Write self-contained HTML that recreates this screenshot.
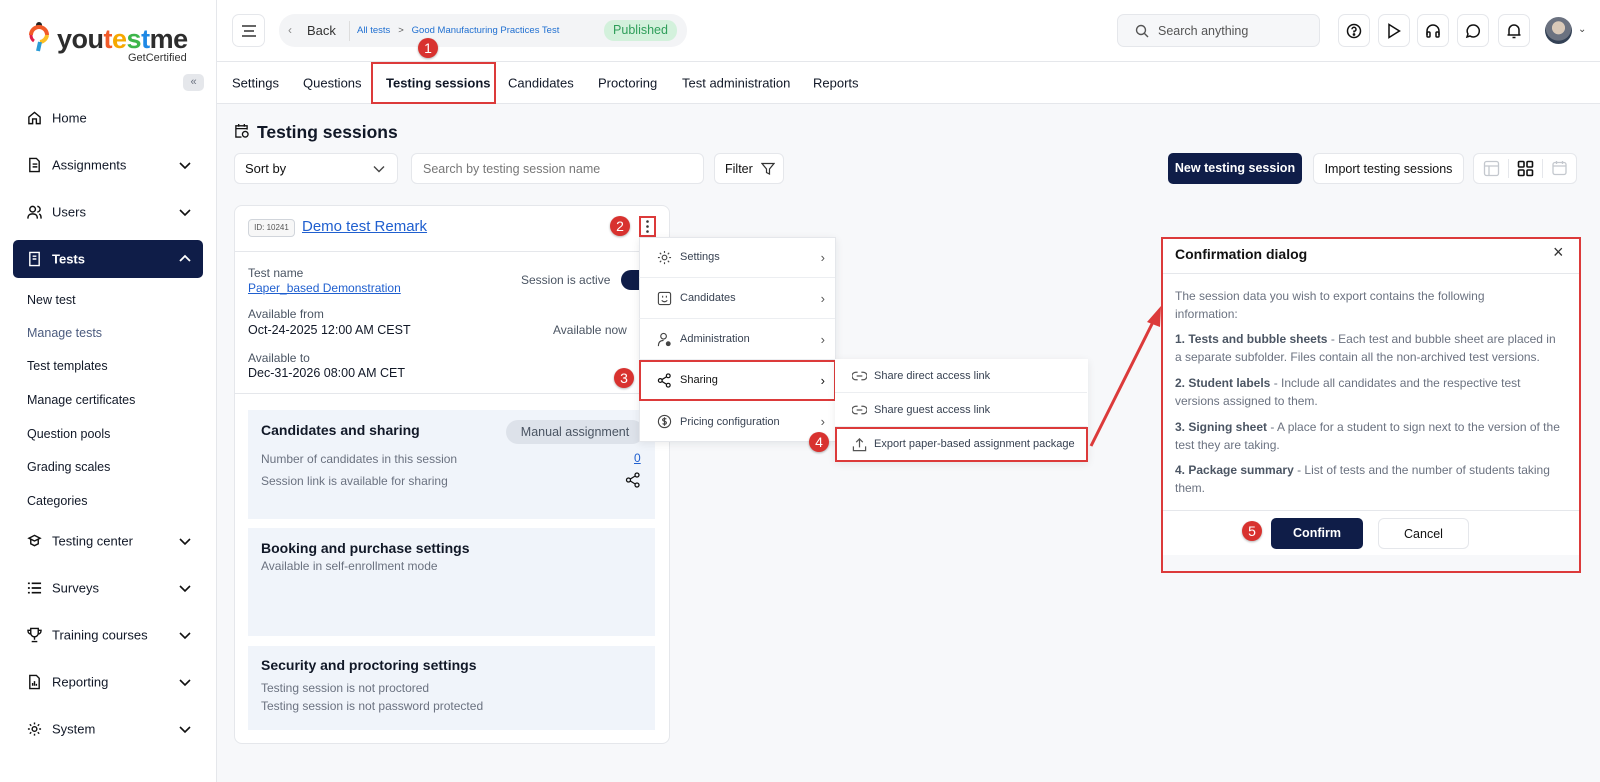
<!DOCTYPE html>
<html><head><meta charset="utf-8"><style>
*{box-sizing:border-box;margin:0;padding:0}
body{width:1600px;height:782px;overflow:hidden;font-family:"Liberation Sans",sans-serif;background:#f7f8fa;position:relative;color:#1f2937;font-size:13px}
.a{position:absolute}
.side{left:0;top:0;width:217px;height:782px;background:#fff;border-right:1px solid #e5e7eb}
.hdr{left:217px;top:0;width:1383px;height:62px;background:#fff;border-bottom:1px solid #e5e7eb}
.tabs{left:217px;top:62px;width:1383px;height:42px;background:#fff;border-bottom:1px solid #e5e7eb}
.nav{left:27px;font-size:13px;color:#111827;display:flex;align-items:center;gap:10px;transform:translateY(-50%)}
.sub{left:27px;font-size:12.5px;color:#111827;transform:translateY(-50%)}
.ib{width:32px;height:33px;border:1px solid #e5e7eb;border-radius:7px;background:#fff;display:flex;align-items:center;justify-content:center;top:14px}
.tab{top:83px;transform:translateY(-50%);font-size:13px;color:#111827}
.btn{border:1px solid #e5e7eb;border-radius:6px;background:#fff;display:flex;align-items:center}
.badge{width:20px;height:20px;border-radius:50%;background:#d8322f;color:#fff;font-size:14px;display:flex;align-items:center;justify-content:center;box-shadow:0 1px 2px rgba(0,0,0,.3)}
.red{border:2px solid #dc3a3a}
.mi{left:639px;width:196px;height:41px;display:flex;align-items:center;font-size:11px;color:#374151;border-bottom:1px solid #eceef1}
.mi svg{margin:0 8px 0 18px}
.mi .r{position:absolute;right:10px;color:#555;font-size:13px}
.si{left:835px;width:252px;height:34px;display:flex;align-items:center;font-size:11px;color:#374151;border-bottom:1px solid #eceef1}
.si svg{margin:0 7px 0 17px}
.lbl{font-size:12px;color:#4b5563}
.val{font-size:12.5px;color:#111827}
.sec{left:248px;width:407px;background:#f0f4fa}
.sec h4{font-size:14px;font-weight:bold;color:#111827;position:absolute;left:13px}
.sec p{position:absolute;left:13px;font-size:12px;color:#6b7280}
.dp{position:absolute;left:14px;width:385px;font-size:12px;color:#6b7280;line-height:18px}
.dp b{font-weight:bold;color:#4b5563}
</style></head><body>
<div class="a side"></div>
<svg class="a" style="left:28px;top:22px" width="22" height="30" viewBox="0 0 22 30"><circle cx="11" cy="3" r="3" fill="#222"/><path d="M3 13a8 8 0 0 1 16 0" stroke="#f15a29" stroke-width="4" fill="none"/><path d="M19 13a8 8 0 0 1-7 7" stroke="#fbbf24" stroke-width="4" fill="none"/><path d="M12 20l-2 9" stroke="#2b9bd6" stroke-width="4"/><path d="M3 13q0 4 3 6" stroke="#e11d48" stroke-width="3" fill="none"/></svg>
<div class="a" style="left:57px;top:24px;font-size:27px;font-weight:bold;letter-spacing:-0.5px;color:#2d2d2d">you<span style="color:#f15a29">t</span><span style="color:#f6a800">e</span><span style="color:#3db54a">s</span><span style="color:#1e88e5">t</span>me</div>
<div class="a" style="left:128px;top:52px;font-size:11px;color:#333">GetCertified</div>
<div class="a" style="left:183px;top:74px;width:21px;height:17px;background:#e5e7eb;border-radius:5px;color:#6b7280;font-size:11px;text-align:center;line-height:16px">«</div>

<div class="a nav" style="top:118px"><svg width="15" height="15" viewBox="0 0 16 16" fill="none" stroke="#111" stroke-width="1.5"><path d="M2 7l6-5 6 5v7H10V9H6v5H2z"/></svg>Home</div>
<div class="a nav" style="top:165px"><svg width="15" height="15" viewBox="0 0 16 16" fill="none" stroke="#111" stroke-width="1.5"><path d="M3 1h7l3 3v11H3z M6 7h5M6 10h5"/></svg>Assignments</div>
<div class="a nav" style="top:212px"><svg width="15" height="15" viewBox="0 0 16 16" fill="none" stroke="#111" stroke-width="1.5"><circle cx="6" cy="5" r="3"/><path d="M1 15c0-4 2-5 5-5s5 1 5 5M11 2a3 3 0 0 1 0 6M13 10c2 1 2 3 2 5"/></svg>Users</div>
<div class="a" style="left:13px;top:240px;width:190px;height:38px;background:#0f1d48;border-radius:5px"></div>
<div class="a nav" style="top:259px;color:#fff;font-weight:bold"><svg width="15" height="15" viewBox="0 0 16 16" fill="none" stroke="#fff" stroke-width="1.5"><path d="M3 1h10v14H3z M6 5h4M6 8h4"/></svg>Tests</div>
<svg class="a" style="left:179px;top:254px" width="12" height="10" viewBox="0 0 12 10"><path d="M1 7l5-5 5 5" stroke="#fff" stroke-width="1.8" fill="none"/></svg>
<svg class="a" style="left:179px;top:160px" width="12" height="10" viewBox="0 0 12 10"><path d="M1 3l5 5 5-5" stroke="#111" stroke-width="1.6" fill="none"/></svg>
<svg class="a" style="left:179px;top:207px" width="12" height="10" viewBox="0 0 12 10"><path d="M1 3l5 5 5-5" stroke="#111" stroke-width="1.6" fill="none"/></svg>
<div class="a sub" style="top:300px">New test</div>
<div class="a sub" style="top:333px;color:#4b5b7e">Manage tests</div>
<div class="a sub" style="top:366px">Test templates</div>
<div class="a sub" style="top:400px">Manage certificates</div>
<div class="a sub" style="top:434px">Question pools</div>
<div class="a sub" style="top:467px">Grading scales</div>
<div class="a sub" style="top:501px">Categories</div>
<div class="a nav" style="top:541px"><svg width="15" height="15" viewBox="0 0 16 16" fill="none" stroke="#111" stroke-width="1.5"><path d="M8 2l6 3-6 3-6-3z M4 6v5l4 2 4-2V6"/></svg>Testing center</div>
<div class="a nav" style="top:588px"><svg width="15" height="15" viewBox="0 0 16 16" fill="none" stroke="#111" stroke-width="1.8"><path d="M1 3h2M1 8h2M1 13h2M5 3h10M5 8h10M5 13h10"/></svg>Surveys</div>
<div class="a nav" style="top:635px"><svg width="15" height="15" viewBox="0 0 16 16" fill="none" stroke="#111" stroke-width="1.5"><path d="M4 1h8v5a4 4 0 0 1-8 0z M4 3H1c0 3 2 4 3 4M12 3h3c0 3-2 4-3 4M8 10v3M5 15h6"/></svg>Training courses</div>
<div class="a nav" style="top:682px"><svg width="15" height="15" viewBox="0 0 16 16" fill="none" stroke="#111" stroke-width="1.5"><path d="M3 1h7l3 3v11H3z M6 12V9M8 12V7M10 12v-2"/></svg>Reporting</div>
<div class="a nav" style="top:729px"><svg width="15" height="15" viewBox="0 0 16 16" fill="none" stroke="#111" stroke-width="1.5"><circle cx="8" cy="8" r="2.5"/><path d="M8 1v2M8 13v2M1 8h2M13 8h2M3 3l1.5 1.5M11.5 11.5L13 13M3 13l1.5-1.5M11.5 4.5L13 3"/></svg>System</div>
<svg class="a" style="left:179px;top:536px" width="12" height="10" viewBox="0 0 12 10"><path d="M1 3l5 5 5-5" stroke="#111" stroke-width="1.6" fill="none"/></svg>
<svg class="a" style="left:179px;top:583px" width="12" height="10" viewBox="0 0 12 10"><path d="M1 3l5 5 5-5" stroke="#111" stroke-width="1.6" fill="none"/></svg>
<svg class="a" style="left:179px;top:630px" width="12" height="10" viewBox="0 0 12 10"><path d="M1 3l5 5 5-5" stroke="#111" stroke-width="1.6" fill="none"/></svg>
<svg class="a" style="left:179px;top:677px" width="12" height="10" viewBox="0 0 12 10"><path d="M1 3l5 5 5-5" stroke="#111" stroke-width="1.6" fill="none"/></svg>
<svg class="a" style="left:179px;top:724px" width="12" height="10" viewBox="0 0 12 10"><path d="M1 3l5 5 5-5" stroke="#111" stroke-width="1.6" fill="none"/></svg>

<div class="a hdr"></div>
<div class="a ib" style="left:232px;width:33px"><svg width="16" height="14" viewBox="0 0 16 14" stroke="#333" stroke-width="1.5"><path d="M1 2h14M3 7h10M1 12h14"/></svg></div>
<div class="a" style="left:279px;top:14px;width:408px;height:33px;background:#f3f4f6;border-radius:16px"></div>
<div class="a" style="left:288px;top:23px;color:#888;font-size:12px">‹</div>
<div class="a" style="left:307px;top:23px;font-size:13px;color:#333">Back</div>
<div class="a" style="left:349px;top:21px;width:1px;height:20px;background:#ddd"></div>
<div class="a" style="left:357px;top:25px;font-size:9.5px;color:#1f6fd1">All tests &nbsp;&nbsp;<span style="color:#555">&gt;</span>&nbsp;&nbsp; Good Manufacturing Practices Test</div>
<div class="a" style="left:604px;top:20px;width:73px;height:21px;background:#d3f1dc;border-radius:10px;color:#2f9e5a;font-size:12.5px;text-align:center;line-height:21px">Published</div>
<div class="a badge" style="left:418px;top:38px">1</div>
<div class="a" style="left:1117px;top:14px;width:203px;height:33px;background:#f6f7f9;border:1px solid #e5e7eb;border-radius:7px"></div>
<svg class="a" style="left:1135px;top:24px" width="14" height="14" viewBox="0 0 14 14" fill="none" stroke="#555" stroke-width="1.4"><circle cx="6" cy="6" r="4.5"/><path d="M9.5 9.5L13 13"/></svg>
<div class="a" style="left:1158px;top:24px;font-size:12.5px;color:#555">Search anything</div>
<div class="a ib" style="left:1338px"><svg width="16" height="16" viewBox="0 0 16 16" fill="none" stroke="#111" stroke-width="1.5"><circle cx="8" cy="8" r="6.5"/><path d="M6 6.3a2 2 0 1 1 2 2v1.2"/><circle cx="8" cy="11.5" r=".6" fill="#111"/></svg></div>
<div class="a ib" style="left:1378px"><svg width="14" height="16" viewBox="0 0 14 16" fill="none" stroke="#111" stroke-width="1.5"><path d="M2 1.5v13L12.5 8z"/></svg></div>
<div class="a ib" style="left:1417px"><svg width="16" height="16" viewBox="0 0 16 16" fill="none" stroke="#111" stroke-width="1.5"><path d="M2 12V8a6 6 0 0 1 12 0v4"/><rect x="2" y="9" width="3" height="5" rx="1"/><rect x="11" y="9" width="3" height="5" rx="1"/></svg></div>
<div class="a ib" style="left:1457px"><svg width="16" height="16" viewBox="0 0 16 16" fill="none" stroke="#111" stroke-width="1.5"><path d="M8 2a6 6 0 1 1-3 11L2 14l1-3A6 6 0 0 1 8 2z"/></svg></div>
<div class="a ib" style="left:1498px"><svg width="16" height="16" viewBox="0 0 16 16" fill="none" stroke="#111" stroke-width="1.5"><path d="M3 12V7a5 5 0 0 1 10 0v5h1.5H1.5zM6.5 14.5h3"/></svg></div>
<div class="a" style="left:1545px;top:17px;width:27px;height:27px;border-radius:50%;background:radial-gradient(circle at 50% 40%,#d9c9b8 0 30%,#6b7280 32% 60%,#334155 62%)"></div>
<div class="a" style="left:1578px;top:24px;font-size:10px;color:#444">⌄</div>

<div class="a tabs"></div>
<div class="a tab" style="left:232px">Settings</div>
<div class="a tab" style="left:303px">Questions</div>
<div class="a tab" style="left:386px;font-weight:bold">Testing sessions</div>
<div class="a tab" style="left:508px">Candidates</div>
<div class="a tab" style="left:598px">Proctoring</div>
<div class="a tab" style="left:682px">Test administration</div>
<div class="a tab" style="left:813px">Reports</div>
<div class="a red" style="left:371px;top:62px;width:125px;height:42px"></div>

<svg class="a" style="left:234px;top:123px" width="15" height="15" viewBox="0 0 16 16" fill="none" stroke="#111" stroke-width="1.4"><path d="M14 7V3H2v12h6M2 6h12M5 1v3M11 1v3"/><circle cx="12" cy="12" r="3"/></svg>
<div class="a" style="left:257px;top:122px;font-size:17.5px;font-weight:bold;color:#111827">Testing sessions</div>
<div class="a btn" style="left:234px;top:153px;width:164px;height:31px;padding-left:10px;font-size:13px;color:#111">Sort by<svg style="position:absolute;right:12px" width="12" height="8" viewBox="0 0 12 8"><path d="M1 1.5l5 5 5-5" stroke="#444" stroke-width="1.4" fill="none"/></svg></div>
<div class="a btn" style="left:411px;top:153px;width:293px;height:31px;padding-left:11px;font-size:12.5px;color:#777">Search by testing session name</div>
<div class="a btn" style="left:714px;top:153px;width:70px;height:31px;padding-left:10px;font-size:12.5px;color:#111">Filter<svg style="margin-left:8px" width="14" height="14" viewBox="0 0 14 14"><path d="M1 1.5h12L8.5 7v5l-3-1.5V7z" stroke="#333" stroke-width="1.2" fill="none"/></svg></div>
<div class="a" style="left:1168px;top:153px;width:134px;height:31px;background:#0f1d48;border-radius:5px;color:#fff;font-size:12.5px;font-weight:bold;text-align:center;line-height:31px">New testing session</div>
<div class="a btn" style="left:1313px;top:153px;width:151px;height:31px;justify-content:center;font-size:12.5px;color:#111">Import testing sessions</div>
<div class="a btn" style="left:1473px;top:153px;width:104px;height:31px"></div>
<svg class="a" style="left:1483px;top:160px" width="17" height="17" viewBox="0 0 17 17" fill="none" stroke="#c4c8ce" stroke-width="1.3"><rect x="1.5" y="1.5" width="14" height="14" rx="2"/><path d="M1.5 6h14M6 6v9.5"/></svg>
<div class="a" style="left:1508px;top:159px;width:1px;height:19px;background:#e5e7eb"></div>
<svg class="a" style="left:1517px;top:160px" width="17" height="17" viewBox="0 0 17 17" fill="none" stroke="#111" stroke-width="1.6"><rect x="1.5" y="1.5" width="5.5" height="5.5" rx="1"/><rect x="10" y="1.5" width="5.5" height="5.5" rx="1"/><rect x="1.5" y="10" width="5.5" height="5.5" rx="1"/><rect x="10" y="10" width="5.5" height="5.5" rx="1"/></svg>
<div class="a" style="left:1542px;top:159px;width:1px;height:19px;background:#e5e7eb"></div>
<svg class="a" style="left:1552px;top:160px" width="15" height="16" viewBox="0 0 15 16" fill="none" stroke="#c4c8ce" stroke-width="1.3"><rect x="1" y="2.5" width="13" height="12" rx="2"/><path d="M1 6h13M4.5 1v3M10.5 1v3"/></svg>

<div class="a" style="left:234px;top:205px;width:436px;height:539px;background:#fff;border:1px solid #e5e7eb;border-radius:8px"></div>
<div class="a" style="left:248px;top:219px;width:47px;height:18px;border:1px solid #d1d5db;border-radius:4px;background:#f7f7f7;font-size:8px;color:#555;text-align:center;line-height:16px">ID: 10241</div>
<div class="a" style="left:302px;top:218px;font-size:15px;color:#1f5fcf;text-decoration:underline">Demo test Remark</div>
<div class="a" style="left:235px;top:251px;width:434px;height:1px;background:#e5e7eb"></div>
<svg class="a" style="left:639px;top:216px" width="17" height="21" viewBox="0 0 17 21"><circle cx="8.5" cy="5.5" r="1.3" fill="#333"/><circle cx="8.5" cy="10.5" r="1.3" fill="#333"/><circle cx="8.5" cy="15.5" r="1.3" fill="#333"/></svg>
<div class="a red" style="left:639px;top:216px;width:17px;height:21px"></div>
<div class="a badge" style="left:610px;top:216px">2</div>
<div class="a lbl" style="left:248px;top:266px">Test name</div>
<div class="a" style="left:248px;top:281px;font-size:12px;color:#1f5fcf;text-decoration:underline">Paper_based Demonstration</div>
<div class="a lbl" style="left:521px;top:273px">Session is active</div>
<div class="a" style="left:621px;top:270px;width:30px;height:20px;border-radius:10px;background:#0f1d48"></div>
<div class="a lbl" style="left:248px;top:307px">Available from</div>
<div class="a val" style="left:248px;top:323px">Oct-24-2025 12:00 AM CEST</div>
<div class="a lbl" style="left:553px;top:323px">Available now</div>
<div class="a lbl" style="left:248px;top:351px">Available to</div>
<div class="a val" style="left:248px;top:366px">Dec-31-2026 08:00 AM CET</div>
<div class="a" style="left:235px;top:393px;width:434px;height:1px;background:#e5e7eb"></div>
<div class="a sec" style="top:410px;height:109px"><h4 style="top:12px">Candidates and sharing</h4><p style="top:42px">Number of candidates in this session</p><p style="top:64px">Session link is available for sharing</p>
<div style="position:absolute;left:258px;top:10px;width:138px;height:24px;background:#dde2ea;border-radius:12px;font-size:12.5px;color:#4b5563;text-align:center;line-height:24px">Manual assignment</div>
<div style="position:absolute;left:386px;top:41px;font-size:12px;color:#1f5fcf;text-decoration:underline">0</div>
<svg style="position:absolute;left:377px;top:62px" width="16" height="16" viewBox="0 0 16 16" fill="none" stroke="#111" stroke-width="1.3"><circle cx="12" cy="3" r="2"/><circle cx="3.5" cy="8" r="2"/><circle cx="12" cy="13" r="2"/><path d="M5.3 7l4.9-3M5.3 9l4.9 3"/></svg></div>
<div class="a sec" style="top:528px;height:108px"><h4 style="top:12px">Booking and purchase settings</h4><p style="top:31px">Available in self-enrollment mode</p></div>
<div class="a sec" style="top:646px;height:84px"><h4 style="top:11px">Security and proctoring settings</h4><p style="top:35px">Testing session is not proctored</p><p style="top:53px">Testing session is not password protected</p></div>

<div class="a" style="left:639px;top:237px;width:197px;height:205px;background:#fff;border:1px solid #e5e7eb;box-shadow:0 2px 8px rgba(0,0,0,.08)"></div>
<div class="a mi" style="top:237px"><svg width="15" height="15" viewBox="0 0 16 16" fill="none" stroke="#444" stroke-width="1.2"><circle cx="8" cy="8" r="2.5"/><path d="M8 1v2M8 13v2M1 8h2M13 8h2M3 3l1.5 1.5M11.5 11.5L13 13M3 13l1.5-1.5M11.5 4.5L13 3"/></svg>Settings<span class="r">›</span></div>
<div class="a mi" style="top:278px"><svg width="15" height="15" viewBox="0 0 16 16" fill="none" stroke="#444" stroke-width="1.2"><rect x="1.5" y="1.5" width="13" height="13" rx="2"/><path d="M5 10c2 2 4 2 6 0M6 5v2M10 5v2"/></svg>Candidates<span class="r">›</span></div>
<div class="a mi" style="top:319px"><svg width="15" height="15" viewBox="0 0 16 16" fill="none" stroke="#444" stroke-width="1.2"><circle cx="7" cy="4.5" r="3"/><path d="M1.5 15c0-4 2-6 5.5-6"/><circle cx="12" cy="12.5" r="2" fill="#444"/></svg>Administration<span class="r">›</span></div>
<div class="a mi" style="top:360px;color:#111"><svg width="15" height="15" viewBox="0 0 16 16" fill="none" stroke="#111" stroke-width="1.3"><circle cx="12" cy="3" r="2"/><circle cx="3.5" cy="8" r="2"/><circle cx="12" cy="13" r="2"/><path d="M5.3 7l4.9-3M5.3 9l4.9 3"/></svg>Sharing<span class="r" style="color:#111">›</span></div>
<div class="a mi" style="top:401px;border-bottom:none"><svg width="15" height="15" viewBox="0 0 16 16" fill="none" stroke="#444" stroke-width="1.2"><circle cx="8" cy="8" r="6.5"/><path d="M10 5.5c-1-1-4-1-4 .8s4 1 4 3-3 2-4 .8M8 3.5v9"/></svg>Pricing configuration<span class="r">›</span></div>
<div class="a red" style="left:639px;top:360px;width:197px;height:41px"></div>
<div class="a badge" style="left:614px;top:368px">3</div>
<div class="a" style="left:835px;top:359px;width:253px;height:103px;background:#fff;box-shadow:0 2px 8px rgba(0,0,0,.08)"></div>
<div class="a si" style="top:359px"><svg width="15" height="12" viewBox="0 0 16 12" fill="none" stroke="#555" stroke-width="1.3"><path d="M6 2H4a4 4 0 0 0 0 8h2M10 2h2a4 4 0 0 1 0 8h-2M5 6h6"/></svg>Share direct access link</div>
<div class="a si" style="top:393px"><svg width="15" height="12" viewBox="0 0 16 12" fill="none" stroke="#555" stroke-width="1.3"><path d="M6 2H4a4 4 0 0 0 0 8h2M10 2h2a4 4 0 0 1 0 8h-2M5 6h6"/></svg>Share guest access link</div>
<div class="a si" style="top:427px;border-bottom:none"><svg width="15" height="15" viewBox="0 0 16 16" fill="none" stroke="#555" stroke-width="1.3"><path d="M8 11V2M4.5 5.5L8 2l3.5 3.5M1.5 10v4.5h13V10"/></svg>Export paper-based assignment package</div>
<div class="a red" style="left:835px;top:427px;width:253px;height:35px"></div>
<div class="a badge" style="left:809px;top:432px">4</div>

<svg class="a" style="left:1085px;top:300px" width="85" height="160" viewBox="0 0 85 160"><path d="M6 146L70 18" stroke="#dc3a3a" stroke-width="3"/><path d="M76 6L62 22l13 5z" fill="#dc3a3a"/></svg>

<div class="a" style="left:1161px;top:237px;width:420px;height:336px;background:#fff;border:2px solid #dc3a3a"></div>
<div class="a" style="left:1175px;top:246px;font-size:14px;font-weight:bold;color:#111">Confirmation dialog</div>
<div class="a" style="left:1553px;top:242px;font-size:18px;color:#333">×</div>
<div class="a" style="left:1163px;top:273px;width:416px;height:1px;background:#e5e7eb"></div>
<div class="a dp" style="left:1175px;top:287px">The session data you wish to export contains the following<br>information:</div>
<div class="a dp" style="left:1175px;top:330px"><b>1. Tests and bubble sheets</b> - Each test and bubble sheet are placed in a separate subfolder. Files contain all the non-archived test versions.</div>
<div class="a dp" style="left:1175px;top:374px"><b>2. Student labels</b> - Include all candidates and the respective test versions assigned to them.</div>
<div class="a dp" style="left:1175px;top:418px"><b>3. Signing sheet</b> - A place for a student to sign next to the version of the test they are taking.</div>
<div class="a dp" style="left:1175px;top:461px"><b>4. Package summary</b> - List of tests and the number of students taking them.</div>
<div class="a" style="left:1163px;top:510px;width:416px;height:1px;background:#e5e7eb"></div>
<div class="a" style="left:1163px;top:555px;width:416px;height:16px;background:#f7f8fa"></div>
<div class="a" style="left:1271px;top:518px;width:92px;height:31px;background:#0f1d48;border-radius:5px;color:#fff;font-size:12.5px;font-weight:bold;text-align:center;line-height:31px">Confirm</div>
<div class="a btn" style="left:1378px;top:518px;width:91px;height:31px;justify-content:center;font-size:12.5px;color:#111">Cancel</div>
<div class="a badge" style="left:1242px;top:521px">5</div>
</body></html>
